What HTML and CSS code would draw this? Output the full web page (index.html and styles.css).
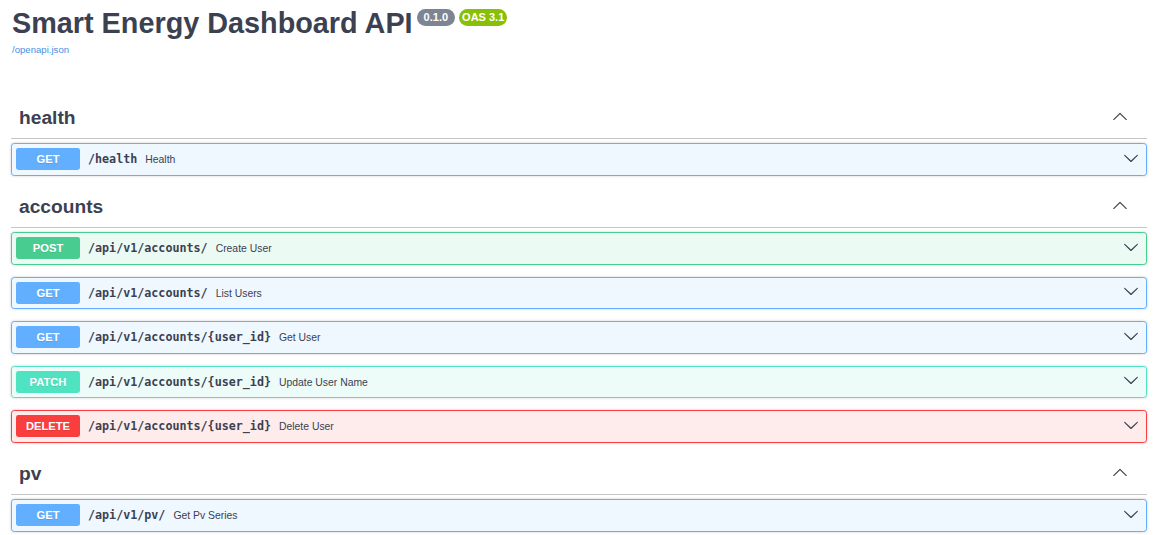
FILE: index.html
```html
<!DOCTYPE html>
<html lang="en">
<head>
<meta charset="utf-8">
<title>Smart Energy Dashboard API</title>
<link rel="stylesheet" href="styles.css">
</head>
<body>
<div class="page">
  <div class="info">
    <h2 class="title">
      <span class="title-text">Smart Energy Dashboard API</span>
      <span class="badge badge-version">0.1.0</span>
      <span class="badge badge-oas">OAS 3.1</span>
    </h2>
    <a class="spec-link" href="#">/openapi.json</a>
  </div>

  <section class="tag-section">
    <h3 class="tag">
      <span class="tag-name">health</span>
      <svg class="arrow arrow-up" viewBox="0 0 20 20" width="16" height="16"><path d="M17.418 14.908c.272.268.709.268.979 0s.271-.701 0-.969l-7.908-7.83c-.27-.268-.707-.268-.979 0l-7.908 7.83c-.27.268-.27.701 0 .969.271.268.709.268.979 0L10 7.767l7.418 7.141z"/></svg>
    </h3>
    <div class="op op-get">
      <span class="method">GET</span>
      <span class="path">/health</span>
      <span class="summary">Health</span>
      <svg class="arrow arrow-down" viewBox="0 0 20 20" width="16" height="16"><path d="M17.418 6.109c.272-.268.709-.268.979 0s.271.701 0 .969l-7.908 7.83c-.27.268-.707.268-.979 0l-7.908-7.83c-.27-.268-.27-.701 0-.969.271-.268.709-.268.979 0L10 13.25l7.418-7.141z"/></svg>
    </div>
  </section>

  <section class="tag-section">
    <h3 class="tag">
      <span class="tag-name">accounts</span>
      <svg class="arrow arrow-up" viewBox="0 0 20 20" width="16" height="16"><path d="M17.418 14.908c.272.268.709.268.979 0s.271-.701 0-.969l-7.908-7.83c-.27-.268-.707-.268-.979 0l-7.908 7.83c-.27.268-.27.701 0 .969.271.268.709.268.979 0L10 7.767l7.418 7.141z"/></svg>
    </h3>
    <div class="op op-post">
      <span class="method">POST</span>
      <span class="path">/api/v1/accounts/</span>
      <span class="summary">Create User</span>
      <svg class="arrow arrow-down" viewBox="0 0 20 20" width="16" height="16"><path d="M17.418 6.109c.272-.268.709-.268.979 0s.271.701 0 .969l-7.908 7.83c-.27.268-.707.268-.979 0l-7.908-7.83c-.27-.268-.27-.701 0-.969.271-.268.709-.268.979 0L10 13.25l7.418-7.141z"/></svg>
    </div>
    <div class="op op-get">
      <span class="method">GET</span>
      <span class="path">/api/v1/accounts/</span>
      <span class="summary">List Users</span>
      <svg class="arrow arrow-down" viewBox="0 0 20 20" width="16" height="16"><path d="M17.418 6.109c.272-.268.709-.268.979 0s.271.701 0 .969l-7.908 7.83c-.27.268-.707.268-.979 0l-7.908-7.83c-.27-.268-.27-.701 0-.969.271-.268.709-.268.979 0L10 13.25l7.418-7.141z"/></svg>
    </div>
    <div class="op op-get">
      <span class="method">GET</span>
      <span class="path">/api/v1/accounts/{user_id}</span>
      <span class="summary">Get User</span>
      <svg class="arrow arrow-down" viewBox="0 0 20 20" width="16" height="16"><path d="M17.418 6.109c.272-.268.709-.268.979 0s.271.701 0 .969l-7.908 7.83c-.27.268-.707.268-.979 0l-7.908-7.83c-.27-.268-.27-.701 0-.969.271-.268.709-.268.979 0L10 13.25l7.418-7.141z"/></svg>
    </div>
    <div class="op op-patch">
      <span class="method">PATCH</span>
      <span class="path">/api/v1/accounts/{user_id}</span>
      <span class="summary">Update User Name</span>
      <svg class="arrow arrow-down" viewBox="0 0 20 20" width="16" height="16"><path d="M17.418 6.109c.272-.268.709-.268.979 0s.271.701 0 .969l-7.908 7.83c-.27.268-.707.268-.979 0l-7.908-7.83c-.27-.268-.27-.701 0-.969.271-.268.709-.268.979 0L10 13.25l7.418-7.141z"/></svg>
    </div>
    <div class="op op-delete">
      <span class="method">DELETE</span>
      <span class="path">/api/v1/accounts/{user_id}</span>
      <span class="summary">Delete User</span>
      <svg class="arrow arrow-down" viewBox="0 0 20 20" width="16" height="16"><path d="M17.418 6.109c.272-.268.709-.268.979 0s.271.701 0 .969l-7.908 7.83c-.27.268-.707.268-.979 0l-7.908-7.83c-.27-.268-.27-.701 0-.969.271-.268.709-.268.979 0L10 13.25l7.418-7.141z"/></svg>
    </div>
  </section>

  <section class="tag-section">
    <h3 class="tag">
      <span class="tag-name">pv</span>
      <svg class="arrow arrow-up" viewBox="0 0 20 20" width="16" height="16"><path d="M17.418 14.908c.272.268.709.268.979 0s.271-.701 0-.969l-7.908-7.83c-.27-.268-.707-.268-.979 0l-7.908 7.83c-.27.268-.27.701 0 .969.271.268.709.268.979 0L10 7.767l7.418 7.141z"/></svg>
    </h3>
    <div class="op op-get">
      <span class="method">GET</span>
      <span class="path">/api/v1/pv/</span>
      <span class="summary">Get Pv Series</span>
      <svg class="arrow arrow-down" viewBox="0 0 20 20" width="16" height="16"><path d="M17.418 6.109c.272-.268.709-.268.979 0s.271.701 0 .969l-7.908 7.83c-.27.268-.707.268-.979 0l-7.908-7.83c-.27-.268-.27-.701 0-.969.271-.268.709-.268.979 0L10 13.25l7.418-7.141z"/></svg>
    </div>
  </section>
</div>
</body>
</html>
```
FILE: styles.css
```css
html, body {
  margin: 0;
  padding: 0;
  background: #ffffff;
}

body {
  font-family: "Liberation Sans", Arial, sans-serif;
  color: #3b4151;
}

.page {
  padding: 0 8px 0 11px;
}

.info {
  padding-top: 6px;
  margin-bottom: 43px;
}

.title {
  display: flex;
  align-items: flex-start;
  margin: 0 0 0 1px;
  font-size: 28.8px;
  line-height: 34.5px;
  font-weight: 700;
  color: #3b4151;
}

.badge {
  display: inline-block;
  margin-top: 3px;
  margin-left: 4px;
  height: 17px;
  line-height: 17px;
  border-radius: 46px;
  color: #ffffff;
  font-size: 11px;
  font-weight: 700;
}

.badge-version {
  background: #7d8492;
  padding: 0 7px;
}

.badge-oas {
  background: #89bf04;
  margin-left: 4px;
  padding: 0 3px;
}

.spec-link {
  display: block;
  margin: 3px 0 0 1px;
  font-size: 9.6px;
  line-height: 12px;
  color: #4990e2;
  text-decoration: none;
}

.tag-section + .tag-section {
  margin-top: 0.5px;
}

.tag {
  display: flex;
  align-items: center;
  height: 39px;
  margin: 0 0 4.5px 0;
  padding: 0 19px 0 8px;
  border-bottom: 1px solid rgba(59, 65, 81, 0.3);
  font-size: 19.2px;
  font-weight: 700;
  color: #3b4151;
}

.tag-name {
  flex: 1;
}

.arrow {
  flex: none;
  fill: #3b4151;
}

.arrow-up {
  margin-bottom: 4px;
}

.op {
  display: flex;
  align-items: center;
  padding: 4px 4px 4.5px 4px;
  margin-bottom: 12px;
  border: 1px solid;
  border-radius: 3.2px;
  box-shadow: 0 0 3px rgba(0, 0, 0, 0.19);
}

.method {
  flex: none;
  width: 64px;
  height: 22px;
  line-height: 22px;
  text-align: center;
  border-radius: 2.4px;
  color: #ffffff;
  font-size: 11.2px;
  font-weight: 700;
  text-shadow: 0 1px 0 rgba(0, 0, 0, 0.1);
}

.path {
  margin-left: 8px;
  font-family: "DejaVu Sans Mono", "Liberation Mono", monospace;
  font-size: 11.7px;
  font-weight: 700;
  color: #3b4151;
}

.summary {
  flex: 1;
  margin-left: 8px;
  padding-top: 1px;
  font-size: 10.4px;
  color: #3b4151;
}

.arrow-down {
  margin-right: 3px;
  margin-bottom: 3px;
}

.op-get {
  background: rgba(97, 175, 254, 0.1);
  border-color: #61affe;
}
.op-get .method { background: #61affe; }

.op-post {
  background: rgba(73, 204, 144, 0.1);
  border-color: #49cc90;
}
.op-post .method { background: #49cc90; }

.op-patch {
  background: rgba(80, 227, 194, 0.1);
  border-color: #50e3c2;
}
.op-patch .method { background: #50e3c2; }

.op-delete {
  background: rgba(249, 62, 62, 0.1);
  border-color: #f93e3e;
}
.op-delete .method { background: #f93e3e; }
```
